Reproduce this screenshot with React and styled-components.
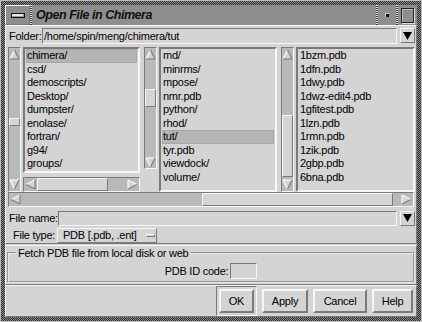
import React from "react";
import styled, { createGlobalStyle, css } from "styled-components";

const BG = "#d4d4d4";
const LIGHT = "#f6f6f6";
const DARK = "#7a7a7a";
const TROUGH = "#b9b9b9";
const SEL = "#b4b4b4";
const FONT = `"Liberation Sans", Arial, sans-serif`;

const raised = css`
  border-style: solid;
  border-color: ${LIGHT} ${DARK} ${DARK} ${LIGHT};
`;
const sunken = css`
  border-style: solid;
  border-color: ${DARK} ${LIGHT} ${LIGHT} ${DARK};
`;

const Global = createGlobalStyle`
  html, body { margin: 0; padding: 0; }
  body {
    width: 422px; height: 322px; overflow: hidden;
    background: #6a6a6a;
    font-family: ${FONT};
    font-size: 11px;
    letter-spacing: -0.25px;
    color: #000;
  }
  * { box-sizing: border-box; }
`;

const Frame = styled.div`
  width: 422px;
  height: 322px;
  border: 1px solid #bdbdbd;
  padding: 4px 4px 5px 4px;
  background-color: #555;
  background-image: repeating-conic-gradient(#2c2c2c 0 25%, #8e8e8e 0 50%);
  background-size: 2px 2px;
  display: flex;
  flex-direction: column;
`;

const TitleBar = styled.div`
  height: 20px;
  display: flex;
  align-items: stretch;
  background: #8e8e8e;
  flex: none;
`;

const MenuBox = styled.div`
  width: 25px;
  ${raised};
  border-width: 1px;
  display: flex;
  align-items: center;
  justify-content: center;
`;

const MenuGlyph = styled.div`
  width: 14px;
  height: 5px;
  border: 1px solid #111;
  background: #e8e8e8;
  box-shadow: inset -1px -1px 0 #999;
`;

const DotSep = styled.div`
  width: 2px;
  background-image: repeating-linear-gradient(#e0e0e0 0 1px, #3a3a3a 1px 2px);
`;

const TitleText = styled.div`
  flex: 1;
  padding-left: 4px;
  display: flex;
  align-items: center;
  font-size: 12.5px;
  letter-spacing: -0.45px;
  font-weight: bold;
  font-style: italic;
  color: #111;
`;

const TitleBtn = styled.div`
  width: ${(p) => p.$w}px;
  display: flex;
  align-items: center;
  justify-content: center;
`;

const Dot = styled.div`
  width: 4px;
  height: 4px;
  background: #111;
  box-shadow: inset 1px 1px 0 #ccc;
`;

const MaxSquare = styled.div`
  width: 13px;
  height: 15px;
  border: 1px solid #222;
  box-shadow: inset 1px 1px 0 #bbb, 1px 1px 0 #ddd;
`;

const Body = styled.div`
  flex: 1;
  background: ${BG};
  display: flex;
  flex-direction: column;
`;

const UpperPanel = styled.div`
  ${raised};
  border-width: 1px;
  padding: 1px 1px 0 1px;
  display: flex;
  flex-direction: column;
`;

const Row = styled.div`
  display: flex;
  align-items: center;
  height: ${(p) => p.$h}px;
  margin-top: ${(p) => p.$mt || 0}px;
  flex: none;
`;

const Label = styled.div`
  width: ${(p) => p.$w}px;
  padding-left: ${(p) => p.$pl || 0}px;
  white-space: nowrap;
  flex: none;
`;

const Field = styled.div`
  flex: 1;
  height: ${(p) => p.$h}px;
  ${sunken};
  border-width: 1px;
  padding-left: 1px;
  display: flex;
  align-items: center;
  white-space: nowrap;
  overflow: hidden;
`;

const DropBtn = styled.div`
  width: 15px;
  height: 15px;
  margin-left: 3px;
  ${raised};
  border-width: 1px;
  display: flex;
  align-items: center;
  justify-content: center;
  flex: none;
`;

const Lists = styled.div`
  display: grid;
  grid-template-columns: 132px 133px 134px;
  column-gap: 4px;
  height: 142px;
  margin-top: 3px;
  margin-left: 1px;
  flex: none;
`;

const Column = styled.div`
  display: flex;
  gap: 2px;
  align-items: flex-start;
  height: 100%;
`;

const Stack = styled.div`
  flex: 1;
  height: 100%;
  display: flex;
  flex-direction: column;
  gap: 4px;
  min-width: 0;
`;

const ListBox = styled.div`
  flex: 1;
  ${sunken};
  border-width: 2px;
  padding: 0 1px;
  overflow: hidden;
  min-height: 0;
`;

const Item = styled.div`
  height: 13.5px;
  line-height: 13.5px;
  padding-left: 1px;
  white-space: nowrap;
  background: ${(p) => (p.$sel ? SEL : "transparent")};
  box-shadow: ${(p) => (p.$sel ? `inset 0 0 0 1px #a8a8a8` : "none")};
`;

const VBar = styled.div`
  width: 13px;
  height: ${(p) => (p.$h ? `${p.$h}px` : "100%")};
  ${sunken};
  border-width: 1px;
  background: ${TROUGH};
  display: flex;
  flex-direction: column;
  flex: none;
`;

const HBar = styled.div`
  height: ${(p) => p.$h}px;
  ${sunken};
  border-width: 1px;
  background: ${TROUGH};
  display: flex;
  flex: ${(p) => (p.$grow ? 1 : "none")};
  margin: 0 ${(p) => p.$mx || 0}px;
`;

const Trough = styled.div`
  flex: 1;
  display: flex;
  flex-direction: ${(p) => (p.$v ? "column" : "row")};
  min-width: 0;
  min-height: 0;
`;

const Thumb = styled.div`
  flex: none;
  ${raised};
  border-width: 1px;
  background: ${BG};
  ${(p) =>
    p.$v
      ? css`
          margin-top: ${p.$start}px;
          height: ${p.$size}px;
        `
      : css`
          margin-left: ${p.$start}px;
          width: ${p.$size}px;
        `}
`;

const ArrowBox = styled.div`
  flex: none;
  width: ${(p) => (p.$v ? "100%" : "13px")};
  height: ${(p) => (p.$v ? "12px" : "100%")};
  display: flex;
  align-items: center;
  justify-content: center;
`;

const Arrow = ({ dir }) => {
  const pts = {
    up: [[5.5, 1], [10, 10], [1, 10]],
    down: [[1, 1], [10, 1], [5.5, 10]],
    left: [[1, 5.5], [10, 1], [10, 10]],
    right: [[1, 1], [10, 5.5], [1, 10]],
  }[dir];
  const p = pts.map((q) => q.join(",")).join(" ");
  const light = "#fafafa";
  const dark = "#808080";
  let segs;
  if (dir === "up")
    segs = [[pts[2], pts[0], light], [pts[0], pts[1], dark], [pts[1], pts[2], dark]];
  else if (dir === "down")
    segs = [[pts[0], pts[1], light], [pts[2], pts[0], light], [pts[1], pts[2], dark]];
  else if (dir === "left")
    segs = [[pts[0], pts[1], light], [pts[1], pts[2], dark], [pts[2], pts[0], dark]];
  else
    segs = [[pts[0], pts[1], light], [pts[2], pts[0], light], [pts[1], pts[2], dark]];
  return (
    <svg width="11" height="11" viewBox="0 0 11 11">
      <polygon points={p} fill={BG} />
      {segs.map(([a, b, c], i) => (
        <line key={i} x1={a[0]} y1={a[1]} x2={b[0]} y2={b[1]} stroke={c} strokeWidth="1.2" />
      ))}
    </svg>
  );
};

const VScroll = ({ h, start, size }) => (
  <VBar $h={h}>
    <ArrowBox $v>
      <Arrow dir="up" />
    </ArrowBox>
    <Trough $v>
      <Thumb $v $start={start} $size={size} />
    </Trough>
    <ArrowBox $v>
      <Arrow dir="down" />
    </ArrowBox>
  </VBar>
);

const HScroll = ({ h, start, size, grow, mx }) => (
  <HBar $h={h} $grow={grow} $mx={mx}>
    <ArrowBox>
      <Arrow dir="left" />
    </ArrowBox>
    <Trough>
      <Thumb $start={start} $size={size} />
    </Trough>
    <ArrowBox>
      <Arrow dir="right" />
    </ArrowBox>
  </HBar>
);

const OptionBtn = styled.div`
  width: 100px;
  height: 15px;
  ${raised};
  border-width: 1px;
  display: flex;
  align-items: center;
  padding-left: 5px;
  gap: 9px;
  white-space: nowrap;
`;

const OptionMark = styled.div`
  width: 9px;
  height: 3px;
  ${raised};
  border-width: 1px;
`;

const LowerPanel = styled.div`
  ${raised};
  border-width: 1px;
  margin-top: 1px;
  padding: 1px;
  height: 40px;
  flex: none;
`;

const Group = styled.fieldset`
  margin: 0;
  padding: 2px 0 0 0;
  height: 36px;
  border: 2px groove #e8e8e8;
  display: flex;
  justify-content: center;
  align-items: center;
  gap: 2px;
`;

const Legend = styled.legend`
  margin-left: 7px;
  padding: 0 2px;
  line-height: 12px;
`;

const SmallInput = styled.div`
  width: 27px;
  height: 16px;
  ${sunken};
  border-width: 1px;
`;

const ButtonRow = styled.div`
  flex: 1;
  display: flex;
  justify-content: flex-end;
  align-items: center;
  gap: 5px;
  padding-right: 3px;
  ${raised};
  border-width: 1px;
`;

const DefaultRing = styled.div`
  ${sunken};
  border-width: 1px;
  padding: 2px;
`;

const Button = styled.div`
  width: ${(p) => p.$w}px;
  height: 24px;
  ${raised};
  border-width: 2px;
  display: flex;
  align-items: center;
  justify-content: center;
`;

const DownTri = () => (
  <svg width="11" height="10" viewBox="0 0 11 10">
    <polygon points="1,1 10,1 5.5,9" fill="#000" />
  </svg>
);

const col1 = ["chimera/", "csd/", "demoscripts/", "Desktop/", "dumpster/", "enolase/", "fortran/", "g94/", "groups/"];
const col2 = ["md/", "minrms/", "mpose/", "nmr.pdb", "python/", "rhod/", "tut/", "tyr.pdb", "viewdock/", "volume/"];
const col3 = ["1bzm.pdb", "1dfn.pdb", "1dwy.pdb", "1dwz-edit4.pdb", "1gfitest.pdb", "1lzn.pdb", "1rmn.pdb", "1zik.pdb", "2gbp.pdb", "6bna.pdb"];

export default function App() {
  return (
    <>
      <Global />
      <Frame>
        <TitleBar>
          <MenuBox>
            <MenuGlyph />
          </MenuBox>
          <DotSep />
          <TitleText>Open File in Chimera</TitleText>
          <DotSep />
          <TitleBtn $w={18}>
            <Dot />
          </TitleBtn>
          <DotSep />
          <TitleBtn $w={19}>
            <MaxSquare />
          </TitleBtn>
        </TitleBar>
        <Body>
          <UpperPanel>
            <Row $h={17}>
              <Label $w={35} $pl={2}>Folder:</Label>
              <Field $h={16}>/home/spin/meng/chimera/tut</Field>
              <DropBtn>
                <DownTri />
              </DropBtn>
            </Row>
            <Lists>
              <Column>
                <VScroll start={58} size={8} />
                <Stack>
                  <ListBox>
                    {col1.map((t, i) => (
                      <Item key={t} $sel={i === 0}>{t}</Item>
                    ))}
                  </ListBox>
                  <HScroll h={15} start={0} size={71} />
                </Stack>
              </Column>
              <Column>
                <VScroll h={122} start={29} size={18} />
                <Stack>
                  <ListBox>
                    {col2.map((t, i) => (
                      <Item key={t} $sel={i === 6}>{t}</Item>
                    ))}
                  </ListBox>
                </Stack>
              </Column>
              <Column>
                <VScroll start={55} size={62} />
                <Stack>
                  <ListBox>
                    {col3.map((t) => (
                      <Item key={t}>{t}</Item>
                    ))}
                  </ListBox>
                </Stack>
              </Column>
            </Lists>
            <Row $h={15} $mt={3}>
              <HScroll h={15} start={180} size={191} grow mx={1} />
            </Row>
            <Row $h={16} $mt={3}>
              <Label $w={51} $pl={2}>File name:</Label>
              <Field $h={15} />
              <DropBtn>
                <DownTri />
              </DropBtn>
            </Row>
            <Row $h={16} $mt={1}>
              <Label $w={50} $pl={6}>File type:</Label>
              <OptionBtn>
                PDB [.pdb, .ent]
                <OptionMark />
              </OptionBtn>
            </Row>
          </UpperPanel>
          <LowerPanel>
            <Group>
              <Legend>Fetch PDB file from local disk or web</Legend>
              PDB ID code:
              <SmallInput />
            </Group>
          </LowerPanel>
          <ButtonRow>
            <DefaultRing>
              <Button $w={35}>OK</Button>
            </DefaultRing>
            <Button $w={46}>Apply</Button>
            <Button $w={54}>Cancel</Button>
            <Button $w={41}>Help</Button>
          </ButtonRow>
        </Body>
      </Frame>
    </>
  );
}
